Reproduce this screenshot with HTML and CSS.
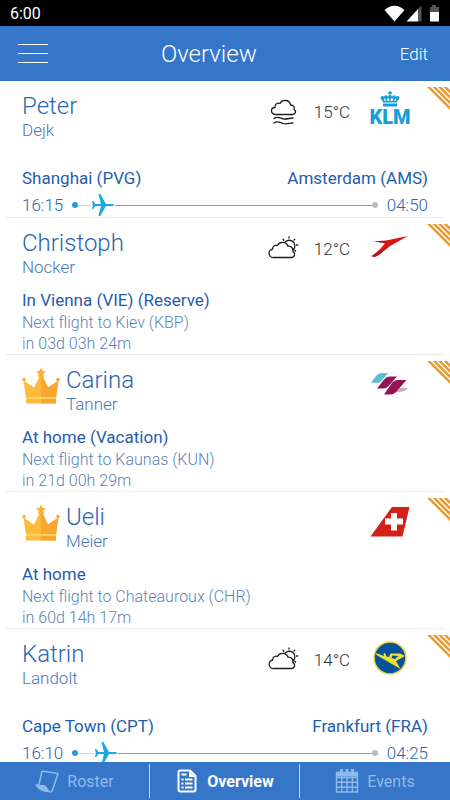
FILE: index.html
```html
<!DOCTYPE html>
<html lang="en">
<head>
<meta charset="utf-8">
<meta name="viewport" content="width=device-width, initial-scale=1">
<title>Overview</title>
<link rel="stylesheet" href="styles.css">
</head>
<body>
<svg class="defs" aria-hidden="true">
  <defs>
    <symbol id="stripes" viewBox="0 0 24 24">
      <path d="M1 1H4.500L24 20.500V24ZM6.500 1H10L24 15V18.500ZM12 1H15.500L24 9.500V13ZM17.500 1H21L24 4V7.500Z" fill="#ea9a2c"/>
    </symbol>
    <symbol id="crown" viewBox="0 0 38 38">
      <path d="M4 36.500V31L1.500 13.500 12 20.500 19 6 26 20.500 36.500 13.500 34 31V36.500Z" fill="#fdbb3d"/>
      <path d="M19 6 26 20.500 36.500 13.500 34 31V36.500H19Z" fill="#f8a82f"/>
      <path d="M4 30H34V32H4Z" fill="#ffd061"/>
      <path d="M19 .500 20.500 4 24 4.300 21.300 6.700 22.200 10.300 19 8.500 15.800 10.300 16.700 6.700 14 4.300 17.500 4Z" fill="#fbb034"/>
      <circle cx="2" cy="12.500" r="1.800" fill="#fbb034"/><circle cx="36" cy="12.500" r="1.800" fill="#f8a82f"/>
    </symbol>
    <symbol id="partly" viewBox="0 0 32 24">
      <g fill="none" stroke="#1c1c1c" stroke-width="1.300" stroke-linecap="round" stroke-linejoin="round">
        <path d="M6 21.500A4.300 4.300 0 0 1 4.700 13C4.300 10 7.500 8.500 9.500 9.500 11.500 5.200 18.500 5.500 20 10.200 23.500 9.800 25.500 13 24.700 15.300 28 17 26.500 21.500 23.500 21.500Z"/>
        <path d="M17 6.200A5 5 0 1 1 25.500 13.500M21 .800V2M15 3.300 15.800 4.200M26.700 3.300 26 4.100M28.500 9H29.800M26.800 14.300 27.600 15"/>
      </g>
    </symbol>
    <symbol id="fog" viewBox="0 0 32 28">
      <g fill="none" stroke="#1c1c1c" stroke-width="1.300" stroke-linecap="round" stroke-linejoin="round">
        <path d="M7.500 17.500C2 17 2.500 10.500 7 10.500 6.500 7 10 5.500 12 6.500 14.500 1.500 22 3 22.500 8 26 8 27 10.500 26 12.500 29 14.500 27 17.500 24.500 17.500Z"/>
        <path d="M6 21.500C9 19 12 21 15 21.800S22 21 25 21M6 26C9 23.500 12 25.500 15 26.500S22 26 25 26"/>
      </g>
    </symbol>
    <symbol id="plane" viewBox="0 0 24 24">
      <path d="M1 8H2.200L4.500 11H10L7.500 1H9.300L15 11H19.500C21.500 11 23.500 11.500 23.500 12S21.500 13 19.500 13H15L9.300 23H7.500L10 13H4.500L2.200 16H1L1.800 12Z" fill="#18a8e4"/>
    </symbol>
  </defs>
</svg>

<div class="status">
  <time>6:00</time>
  <svg class="status-icons" viewBox="0 0 56 20" aria-hidden="true">
    <path d="M.500 7Q10.500-1.500 20.500 7L10.500 18.500Z" fill="#fff"/>
    <path d="M22.500 18.500 34 6V18.500Z" fill="#fff"/><path d="M34 6 37.500 2.500V18.500H34Z" fill="#555"/>
    <path d="M46 4H48V2H52V4H55V9H46Z" fill="#555"/><path d="M46 9H55V18.500H46Z" fill="#fff"/>
  </svg>
</div>

<header class="topbar">
  <button class="menu" type="button" aria-label="Menu"><span></span><span></span><span></span></button>
  <h1>Overview</h1>
  <button class="edit" type="button">Edit</button>
</header>

<main class="list">
  <article class="person">
    <svg class="stripes" aria-hidden="true"><use href="#stripes"/></svg>
    <div class="head">
      <div class="names"><h2>Peter</h2><p>Dejk</p></div>
      <svg class="weather fog" aria-hidden="true"><use href="#fog"/></svg>
      <span class="temp">15°C</span>
      <svg class="logo" viewBox="0 0 42 36" role="img" aria-label="KLM">
        <g fill="#169fd9"><path d="M20.300-2H21.700V-.700H23V.700H21.700V2H20.300V.700H19V-.700H20.300Z"/><circle cx="13.500" cy="5" r="2"/><circle cx="17" cy="4.300" r="2"/><circle cx="21" cy="4" r="2"/><circle cx="25" cy="4.300" r="2"/><circle cx="28.500" cy="5" r="2"/><path d="M12.500 6H14.500L15.500 8H16.500V5.500H17.500L18.500 8H20.300V5H21.700V8H23.500L24.500 5.500H25.500V8H26.500L27.500 6H29.500L28 9.500H14ZM14 10.500H28V13.500H14Z"/></g>
        <text class="klm" x="21" y="31" text-anchor="middle">KLM</text>
      </svg>
    </div>
    <div class="flight">
      <div class="cities"><span>Shanghai (PVG)</span><span>Amsterdam (AMS)</span></div>
      <div class="times"><time>16:15</time>
        <div class="track"><i class="dot start"></i><i class="flown" style="width: 4%"></i><svg class="plane" aria-hidden="true"><use href="#plane"/></svg><i class="ahead"></i><i class="dot"></i></div>
        <time>04:50</time></div>
    </div>
  </article>

  <article class="person">
    <svg class="stripes" aria-hidden="true"><use href="#stripes"/></svg>
    <div class="head">
      <div class="names"><h2>Christoph</h2><p>Nocker</p></div>
      <svg class="weather" aria-hidden="true"><use href="#partly"/></svg>
      <span class="temp">12°C</span>
      <svg class="logo" viewBox="0 0 42 36" role="img" aria-label="Austrian">
        <path d="M5 11.500 17 10.500 39 6 22 15.500C15 19.500 12 25 5 27L2.500 26C9 22 13 17 16 13Z" fill="#d9151b"/>
        <path d="M5 11.500 17 11 16 13Z" fill="#8d1818"/><path d="M22 15.500C15 19.500 12 25 5 27L2.500 26C11 24 14 17.500 22 15.500Z" fill="#a8181a"/>
      </svg>
    </div>
    <div class="state"><h3>In Vienna (VIE) (Reserve)</h3><p>Next flight to Kiev (KBP)<br>in 03d 03h 24m</p></div>
  </article>

  <article class="person">
    <svg class="stripes" aria-hidden="true"><use href="#stripes"/></svg>
    <div class="head">
      <svg class="crown" aria-hidden="true"><use href="#crown"/></svg>
      <div class="names"><h2>Carina</h2><p>Tanner</p></div>
      <svg class="logo" viewBox="0 0 42 36" role="img" aria-label="Eurowings">
        <path d="M24 25C29 21 34 20 39 21.500 37 24.500 31 25 22 26Z" fill="#b9b9b9"/>
        <path d="M2 15.500 7.500 8.500Q9.500 6 12.500 6H19L12.500 14Q10.500 16 7.500 16Z" fill="#5dbdd6"/>
        <path d="M8 21.500 15.500 12Q17.500 9.500 20.500 9.500H28L19.500 19Q17.500 21.500 14.500 21.500Z" fill="#941457"/>
        <path d="M15 27.500 22.500 16.500Q25 13 28.500 13H37.500L27.500 24.500Q25 27.500 21.500 27.500Z" fill="#941457"/>
      </svg>
    </div>
    <div class="state"><h3>At home (Vacation)</h3><p>Next flight to Kaunas (KUN)<br>in 21d 00h 29m</p></div>
  </article>

  <article class="person">
    <svg class="stripes" aria-hidden="true"><use href="#stripes"/></svg>
    <div class="head">
      <svg class="crown" aria-hidden="true"><use href="#crown"/></svg>
      <div class="names"><h2>Ueli</h2><p>Meier</p></div>
      <svg class="logo" viewBox="0 0 42 36" role="img" aria-label="Swiss">
        <path d="M1.500 32.500 23 3H40.500L33.500 32.500Z" fill="#d32018"/><path d="M22 9H28V14.500H34V20.500H28V26.500H22V20.500H16V14.500H22Z" fill="#fff"/>
      </svg>
    </div>
    <div class="state"><h3>At home</h3><p>Next flight to Chateauroux (CHR)<br>in 60d 14h 17m</p></div>
  </article>

  <article class="person">
    <svg class="stripes" aria-hidden="true"><use href="#stripes"/></svg>
    <div class="head">
      <div class="names"><h2>Katrin</h2><p>Landolt</p></div>
      <svg class="weather" aria-hidden="true"><use href="#partly"/></svg>
      <span class="temp">14°C</span>
      <svg class="logo" viewBox="0 0 42 36" role="img" aria-label="Condor">
        <circle cx="21" cy="17" r="16" fill="#08529c" stroke="#eadb48" stroke-width="1.600"/>
        <path d="M7 12 15 15 14.500 12.500 16 12 17.500 15.500 20 16 21.500 12.500H31L36 15 27 20 31.500 28 7.500 14ZM23.500 14.500 22.500 17 26 18 29.500 15Z" fill="#f0df2c" fill-rule="evenodd"/>
      </svg>
    </div>
    <div class="flight">
      <div class="cities"><span>Cape Town (CPT)</span><span>Frankfurt (FRA)</span></div>
      <div class="times"><time>16:10</time>
        <div class="track"><i class="dot start"></i><i class="flown" style="width: 5%"></i><svg class="plane" aria-hidden="true"><use href="#plane"/></svg><i class="ahead"></i><i class="dot"></i></div>
        <time>04:25</time></div>
    </div>
  </article>
</main>

<nav class="tabs">
  <a href="#roster"><svg viewBox="0 0 24 24" aria-hidden="true"><path d="M7 2 23 4.500 17.500 21C17 23 15 23.500 13.500 22.500M7 2 4 15.500M2 15.500C5 18 9 16 11 18.500L14 22.500" fill="none" stroke="currentColor" stroke-width="1.500"/><path d="M.500 15C4 17 9 14.500 11 17.500S13.500 23 15 23C9 24 1 20 .500 15Z" fill="currentColor"/></svg>Roster</a>
  <a href="#overview" class="active" aria-current="page"><svg viewBox="0 0 24 24" aria-hidden="true"><path d="M5 1.500H15L20.500 7V20.500Q20.500 22.500 18.500 22.500H5.500Q3.500 22.500 3.500 20.500V3.500Q3.500 1.500 5 1.500Z" fill="none" stroke="currentColor" stroke-width="2"/><path d="M14 2V8H20Z" fill="currentColor"/><path d="M6.500 5.500H11.500M6.500 10.500H8.500M10 10.500H17.500M6.500 14.500H8.500M10 14.500H17.500M6.500 18.500H8.500M10 18.500H17.500" stroke="currentColor" stroke-width="2"/></svg>Overview</a>
  <a href="#events"><svg viewBox="0 0 24 24" aria-hidden="true"><path d="M1.500 3.500H22.500V23H1.500ZM1.500 8.500H22.500M1.500 13.300H22.500M1.500 18.200H22.500M6.700 8V23M12 8V23M17.300 8V23" fill="none" stroke="currentColor" stroke-width="1.400"/><path d="M1 3H23V7.500H1ZM5 0H8V3H5ZM10.500 0H13.500V3H10.500ZM16 0H19V3H16Z" fill="currentColor"/></svg>Events</a>
</nav>
</body>
</html>
```
FILE: styles.css
```css
* { box-sizing: border-box; }
body {
  margin: 0;
  height: 100vh;
  display: flex;
  flex-direction: column;
  overflow: hidden;
  background: #fff;
  color: #2b66b0;
  font-family: Roboto, "Liberation Sans", sans-serif;
  font-weight: 300;
}
h1, h2, h3, p { margin: 0; font-weight: inherit; }
button { padding: 0; border: 0; background: none; color: inherit; font: inherit; }
.defs { position: absolute; width: 0; height: 0; }

.status {
  flex: none;
  height: 26px;
  padding: 0 10px;
  display: flex;
  align-items: center;
  justify-content: space-between;
  background: #000;
  color: #fff;
  font-size: 16px;
  font-weight: 400;
}
.status-icons { width: 56px; height: 20px; }

.topbar {
  flex: none;
  height: 55px;
  padding: 0 22px 0 18px;
  display: flex;
  align-items: center;
  background: #3576c8;
  color: #fff;
}
.topbar h1 { flex: 1; font-size: 24px; text-align: center; }
.menu { width: 30px; margin-right: -30px; display: grid; gap: 8px; }
.menu span { height: 1px; background: #fff; }
.edit { font-size: 17px; }

.list { flex: 1; min-height: 0; overflow: hidden; padding: 0 6px; }
.person {
  position: relative;
  min-height: 137px;
  padding: 12px 16px 0;
  border-bottom: 1px solid #ebebeb;
}
.stripes { position: absolute; top: 5px; right: -6px; width: 24px; height: 24px; }
.head { display: flex; align-items: flex-start; padding-right: 17px; }
.names { flex: 1; }
.names h2 { font-size: 24px; line-height: 26px; }
.names p { font-size: 17px; line-height: 22px; color: #4878b4; }
.crown { width: 38px; height: 38px; margin-right: 6px; }
.weather { width: 32px; height: 24px; margin-top: 6px; }
.weather.fog { height: 28px; margin-top: 4px; }
.temp { width: 40px; margin: 8px 17px 0 12px; font-size: 17px; line-height: 22px; text-align: center; color: #333; white-space: nowrap; }
.logo { width: 42px; height: 36px; overflow: visible; }
.klm { font: 900 20px Roboto, "Liberation Sans", sans-serif; fill: #169fd9; }

.flight { padding-top: 26px; }
.cities { display: flex; justify-content: space-between; font-size: 17px; line-height: 22px; font-weight: 400; color: #1f5dad; }
.times { display: flex; align-items: center; gap: 9px; padding-top: 5px; font-size: 17px; line-height: 22px; }
.track { flex: 1; display: flex; align-items: center; }
.dot { flex: none; width: 6px; height: 6px; border-radius: 50%; background: #bcbcbc; }
.dot.start { background: #2a9bd3; }
.flown { flex: none; height: 1px; background: #b9d8f0; }
.plane { flex: none; width: 24px; height: 24px; margin: -1px 0; }
.ahead { flex: 1; height: 1px; background: #999; }

.state { padding-top: 11px; }
.state h3 { font-size: 17px; line-height: 22px; font-weight: 400; color: #1f5dad; }
.state p { padding-top: 1px; font-size: 16px; line-height: 21px; color: #5a83b8; }

.tabs { flex: none; height: 38px; display: grid; grid-template-columns: repeat(3, 1fr); background: #3576c8; }
.tabs a {
  margin: 2px 0;
  display: flex;
  align-items: center;
  justify-content: center;
  gap: 8px;
  color: #91b9ee;
  font-size: 16px;
  font-weight: 400;
  text-decoration: none;
}
.tabs a:not(:last-child) { border-right: 1px solid #c4d8f2; }
.tabs a.active { color: #fff; font-weight: 700; }
.tabs svg { width: 24px; height: 24px; }
```
